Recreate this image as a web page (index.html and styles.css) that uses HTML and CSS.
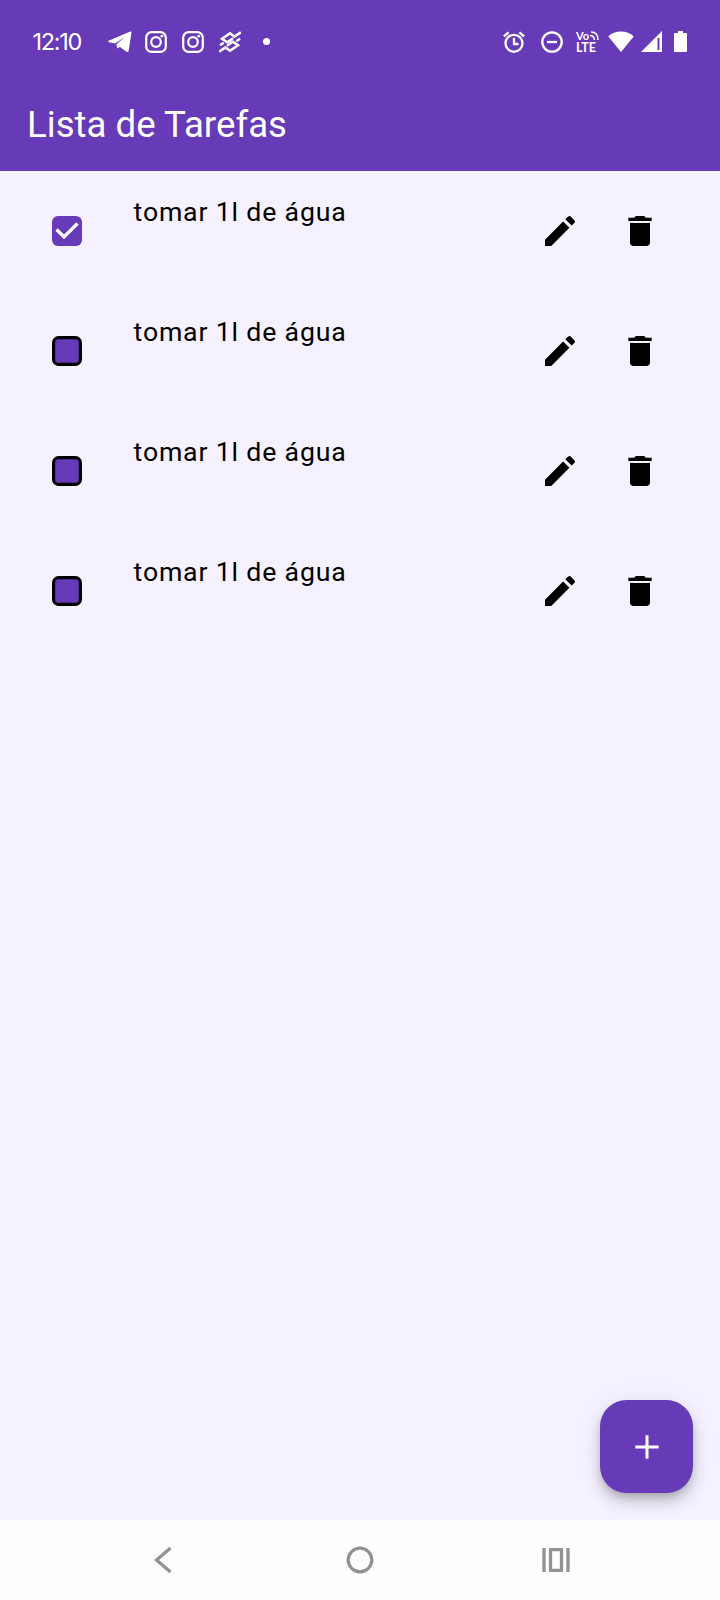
FILE: index.html
```html
<!DOCTYPE html>
<html lang="pt-BR">
<head>
<meta charset="utf-8">
<title>Lista de Tarefas</title>
<link rel="stylesheet" href="styles.css">
</head>
<body>
<svg class="defs" aria-hidden="true">
  <symbol id="edit" viewBox="0 0 24 24"><path d="M3 17.25V21h3.75L17.65 10.1l-3.75-3.75L3 17.25zM20.71 7.04a1 1 0 0 0 0-1.41l-2.34-2.34a1 1 0 0 0-1.41 0l-1.73 1.73 3.75 3.75 1.73-1.73z"/></symbol>
  <symbol id="delete" viewBox="0 0 24 24"><path d="M6 19c0 1.1.9 2 2 2h8c1.1 0 2-.9 2-2V7.200H6V19zM19 4h-3.5l-1-1h-5l-1 1H5v2h14V4z"/></symbol>
  <symbol id="instagram" viewBox="0 0 22 22"><rect x="1.2" y="1.2" width="19.6" height="19.6" rx="5.4" fill="none" stroke="currentColor" stroke-width="2.200"/><circle cx="11" cy="11" r="4.800" fill="none" stroke="currentColor" stroke-width="2.200"/><circle cx="16.8" cy="5.2" r="1.4"/></symbol>
</svg>
<div class="screen">
  <header class="header">
    <div class="status">
      <span class="clock">12:10</span>
      <div class="notifications">
        <svg class="telegram" viewBox="0 0 24 22"><path d="M.7 9.7 22.4.6q1.3-.4 1.1.9L20.6 20q-.5 1.7-2 .8l-6.700-4.800-2.500 1.500-1-4.300L17 6 7 12.600 1 11.2q-1.6-.7-.3-1.5z"/></svg>
        <svg class="insta"><use href="#instagram"/></svg>
        <svg class="insta"><use href="#instagram"/></svg>
        <svg class="bank" viewBox="0 0 22 22"><g fill="none" stroke="currentColor" stroke-width="2.500"><path d="M21.800 1.300 15.500 5.600 11 2.300 3 7.700l5.200 3.500 5.800-3.900M.2 20.700l6.300-4.300L11 19.700l8-5.400-5.200-3.500L8 14.700"/><path d="m21 7.700-3.800 2.600M1 14.300l3.800-2.600"/></g></svg>
        <i class="dot"></i>
      </div>
      <div class="system">
        <svg class="alarm" viewBox="0 0 22 22"><g fill="none" stroke="currentColor" stroke-width="2.300"><circle cx="11" cy="12.300" r="8.500"/><path d="M11 7v6h4.500M.8 5.300l4.800-4M21.200 5.300l-4.800-4"/></g></svg>
        <svg class="dnd" viewBox="0 0 22 22"><g fill="none" stroke="currentColor" stroke-width="2.300"><circle cx="11" cy="11" r="9.700"/><path d="M6 11h10"/></g></svg>
        <div class="volte">
          <div class="vo">Vo<svg viewBox="0 0 9 9"><g fill="none" stroke="currentColor" stroke-width="1.600"><path d="M1 1q7 0 7 8M0 4.500q4 0 4.500 4.500"/></g></svg></div>
          <div class="lte">LTE</div>
        </div>
        <svg class="wifi" viewBox="0 0 26 21"><path d="M13 21 .3 5.500Q5.500.5 13 .5t12.700 5z"/></svg>
        <svg class="signal" viewBox="0 0 21 21"><path fill-rule="evenodd" d="M0 21 21 0v21zM16.500 7v12h2V7z"/></svg>
        <svg class="battery" viewBox="0 0 13 21"><path d="M4 0h5v2h3q1 0 1 1v17q0 1-1 1H1q-1 0-1-1V3q0-1 1-1h3z"/></svg>
      </div>
    </div>
    <h1 class="title">Lista de Tarefas</h1>
  </header>
  <main class="list">
    <div class="task"><svg class="check" viewBox="0 0 30 30"><rect width="30" height="30" rx="6"/><path d="M4.500 13.500 12 21 25.500 7.500"/></svg><span class="label">tomar 1l de água</span><svg class="icon"><use href="#edit"/></svg><svg class="icon last"><use href="#delete"/></svg></div>
    <div class="task"><svg class="check box" viewBox="0 0 30 30"><rect x="1.600" y="1.600" width="26.800" height="26.800" rx="5"/></svg><span class="label">tomar 1l de água</span><svg class="icon"><use href="#edit"/></svg><svg class="icon last"><use href="#delete"/></svg></div>
    <div class="task"><svg class="check box" viewBox="0 0 30 30"><rect x="1.600" y="1.600" width="26.800" height="26.800" rx="5"/></svg><span class="label">tomar 1l de água</span><svg class="icon"><use href="#edit"/></svg><svg class="icon last"><use href="#delete"/></svg></div>
    <div class="task"><svg class="check box" viewBox="0 0 30 30"><rect x="1.600" y="1.600" width="26.800" height="26.800" rx="5"/></svg><span class="label">tomar 1l de água</span><svg class="icon"><use href="#edit"/></svg><svg class="icon last"><use href="#delete"/></svg></div>
    <button class="fab" aria-label="Adicionar"><svg viewBox="0 0 24 24"><path d="M19 12.900h-6.100V19h-1.800v-6.100H5v-1.800h6.100V5h1.800v6.100H19z"/></svg></button>
  </main>
  <nav class="nav">
    <svg class="back" viewBox="0 0 18 28"><path d="M16.500 2 2.500 14l14 12"/></svg>
    <svg class="home" viewBox="0 0 28 28"><circle cx="14" cy="14" r="11.800"/></svg>
    <svg class="recents" viewBox="0 0 28 24"><path d="M2 0v24M26 0v24M8.500 1.500h11v21h-11z"/></svg>
  </nav>
</div>
</body>
</html>
```

FILE: styles.css
```css
* { box-sizing: border-box; }
body { margin: 0; font-family: Roboto, sans-serif; }
svg { display: block; flex: none; fill: currentColor; }
.defs { position: absolute; width: 0; height: 0; }
.screen { width: 720px; height: 1600px; display: flex; flex-direction: column; background: #f5f1ff; }
.header { height: 171px; background: #673ab7; color: #fff; }
.status { height: 83px; padding: 0 32px; display: flex; align-items: center; }
.clock { width: 76px; padding-left: .5px; font-family: Inter, sans-serif; font-size: 23.5px; font-weight: 400; line-height: 28px; letter-spacing: -1.3px; white-space: nowrap; }
.notifications { display: flex; align-items: center; }
.telegram { width: 24px; height: 22px; margin-right: 13px; }
.insta { width: 22px; height: 22px; margin-right: 15px; }
.bank { width: 22px; height: 22px; }
.dot { width: 7px; height: 7px; margin-left: 21.5px; border-radius: 50%; background: #fff; }
.system { display: flex; align-items: center; margin-left: auto; }
.alarm { width: 22px; height: 22px; margin-right: 16px; }
.dnd { width: 22px; height: 22px; margin-right: 13px; }
.volte { width: 24px; margin-right: 8px; font-family: Lato, sans-serif; font-weight: 700; font-size: 12px; }
.vo { height: 10px; display: flex; line-height: 12px; font-size: 11px; }
.vo svg { width: 9px; height: 9px; margin: 1px 0 0 1px; }
.lte { height: 13px; line-height: 15px; font-size: 12.5px; }
.wifi { width: 26px; height: 21px; margin-right: 7px; }
.signal { width: 21px; height: 21px; margin-right: 12px; }
.battery { width: 13px; height: 21px; margin-right: 1px; }
.title { margin: 0; padding: 19px 27px 0; font-size: 36.67px; line-height: 46px; font-weight: 400; }
.list { position: relative; flex: 1; }
.task { height: 120px; padding: 0 60px 0 51.6px; display: flex; align-items: center; color: #000; }
.check { width: 30px; height: 30px; margin-top: .8px; }
.check rect { fill: #673ab7; }
.check path { fill: none; stroke: #fff; stroke-width: 3.33; }
.box rect { stroke: #000; stroke-width: 3.2; }
.label { flex: 1; align-self: flex-start; padding: 21px 0 0 52px; font-size: 26.67px; line-height: 40px; letter-spacing: .83px; }
.icon { width: 40px; height: 40px; margin-top: .6px; }
.last { margin-left: 40px; }
.fab { position: absolute; right: 26.67px; bottom: 26.67px; width: 93.33px; height: 93.33px; padding: 0; border: 0; border-radius: 26.67px; display: grid; place-items: center; background: #673ab7; color: #fff; box-shadow: 0 5px 8px -2px rgba(0,0,0,.2), 0 10px 16px rgba(0,0,0,.14), 0 2px 30px rgba(0,0,0,.06); }
.fab svg { width: 40px; height: 40px; }
.nav { height: 80px; padding: 0 150px; display: grid; grid-template-columns: 1fr 28px 1fr; align-items: center; background: #fdfdff; color: #929292; }
.nav svg { fill: none; stroke: currentColor; stroke-width: 3.3; }
.back { width: 18px; height: 28px; margin-left: 4px; }
.home { width: 28px; height: 28px; }
.recents { width: 28px; height: 24px; justify-self: end; }
```
